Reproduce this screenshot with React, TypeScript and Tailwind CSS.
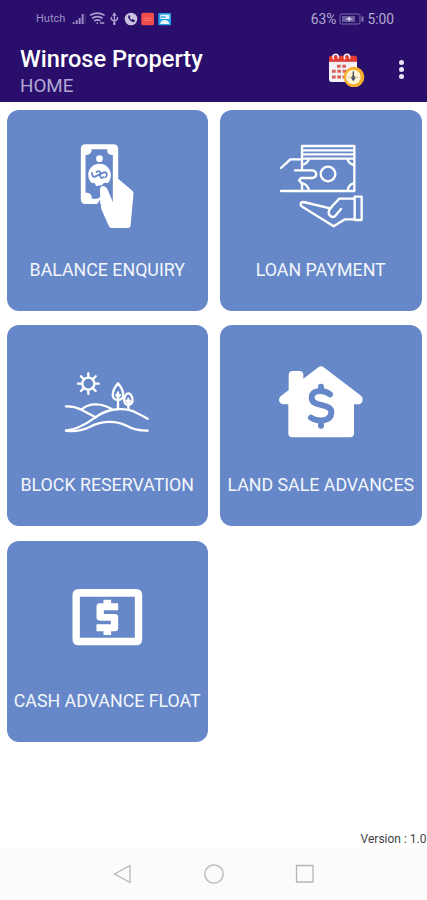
import type { ReactNode } from "react";

const BLUE = "#6688c8";

function CashHandIcon() {
  return (
    <svg className="size-[100px]" viewBox="-7.5 18 300 300" fill="none">
      <path
        fill="#fff"
        fillRule="evenodd"
        d="M78 43H162Q176 43 176 57V146L220 184Q222 187 222 192L213 288Q212 294 206 294H156Q150 294 148 288L125 236V222H78Q64 222 64 208V57Q64 43 78 43ZM96 58V64Q94 73 82 75H78V188H84Q96 190 97 202V206H113L122 202V176Q124 168 131 169Q139 169 143 177L160 218V75H156Q144 73 143 64V58Z"
      />
      <circle cx="120" cy="86" r="10" fill="#fff" />
      <path
        fill="#fff"
        d="M120 101A34 34 0 0 1 154 135Q154 150 145 159L138 158Q131 157 127 166L110 168L105 159L95 158Q86 148 86 135A34 34 0 0 1 120 101Z"
      />
      <path d="M113 221L122 209V230Z" fill={BLUE} />
      <path
        fill="#fff"
        d="M122 176Q124 168 132 168Q139 169 143 177L163 223L149 280L125 232Z"
      />
      <path
        d="M98 129Q97 142 107 140L111 137M111 126Q119 120 122 128V138Q124 147 132 142M131 128Q139 124 142 132Q143 139 138 142M107 140L131 128"
        stroke={BLUE}
        strokeWidth="5.5"
        strokeLinecap="round"
      />
    </svg>
  );
}

function LoanIcon() {
  return (
    <svg
      className="size-[100px]"
      viewBox="18 18 300 300"
      fill="none"
      stroke="#fff"
      strokeWidth="7"
      strokeLinecap="round"
      strokeLinejoin="round"
    >
      <path d="M111 118V48H268V183H48M111 61H268M111 73H268M111 86H268" />
      <path d="M48 114L76 88H108M90 121H143Q154 124 154 133Q152 144 142 144H108L102 151L111 160V183" />
      <path d="M112 104Q127 101 131 88M248 88Q251 101 266 105M266 160Q250 164 248 181M113 160Q128 164 132 181" />
      <circle cx="189" cy="132" r="22" />
      <path d="M195 235L116 216Q106 216 107 224Q107 228 113 231L206 289L240 268H266M195 235L223 206H266M228 237L210 259Q202 264 195 257Q188 250 193 240L202 228" />
      <path d="M269 200H290V270H269Z" />
    </svg>
  );
}

function LandIcon() {
  return (
    <svg
      className="size-[100px]"
      viewBox="22 -28 300 300"
      fill="none"
      stroke="#fff"
      strokeWidth="7"
      strokeLinecap="round"
      strokeLinejoin="round"
    >
      <circle cx="116" cy="70" r="18" />
      <path d="M116 50V39M116 90V101M96 70H85M136 70H147M102 56L94 48M130 56L138 48M102 84L94 92M130 84L138 92" />
      <path d="M49 138Q73 137 95 148L138 171M95 148C119 125 159 129 187 147" />
      <path d="M49 211C82 207 107 193 137 171C178 141 229 141 260 157Q278 166 294 175" />
      <path d="M49 211C72 215 94 212 120 200C155 181 197 180 228 195Q258 212 294 211" />
      <path d="M205 146V96M205 119C181 118 187 91 205 69C223 91 229 118 205 119M200 104L205 110L211 104" />
      <path d="M236 146V116M236 134C219 132 223 112 228 104Q236 94 244 104C251 113 252 132 236 134M231 122L236 127L241 122" />
    </svg>
  );
}

function HouseIcon() {
  return (
    <svg className="size-[100px]" viewBox="18 -13 300 300" fill="none">
      <path
        fill="#fff"
        d="M71 60Q71 47 83 47H103Q115 47 115 59V70L160 36Q168 30 176 36L288 121Q294 126 293 133Q291 147 279 147H267V234Q267 246 255 246H82Q70 246 70 234V147H57Q44 147 42 134Q42 127 48 122L71 104Z"
      />
      <path
        stroke={BLUE}
        strokeWidth="18"
        strokeLinecap="round"
        d="M168 94V106M168 198V211M195 117C175 101 140 104 140 127C140 158 200 141 199 171C198 199 158 201 138 187"
      />
    </svg>
  );
}

function CashFloatIcon() {
  return (
    <svg className="size-[100px]" viewBox="-8.5 -24 300 300" fill="none">
      <path
        fill="#fff"
        fillRule="evenodd"
        d="M57 42H229Q247 42 247 60V193Q247 211 229 211H57Q38 211 38 193V60Q38 42 57 42ZM60 65V188H225V65Z"
      />
      <path
        fill="#fff"
        d="M131 74H154V85H175V106H132V117H165Q175 117 175 127V159Q175 169 165 169H154V180H131V169H110V148H153V137H120Q110 137 110 127V95Q110 85 120 85H131Z"
      />
    </svg>
  );
}

function CalendarIcon() {
  return (
    <svg className="h-[34px] w-[37px]" viewBox="346 157 111 102" fill="none">
      <path d="M349 182H433V236Q433 244 425 244H357Q349 244 349 236Z" fill="#f3f0f6" />
      <path d="M349 183V171Q349 165 355 165H427Q433 165 433 171V183Z" fill="#e53b35" />
      <path
        d="M362 174Q358 161 369 161Q378 161 377 172M396 174Q392 161 403 161Q412 161 411 172"
        stroke="#f5e9f4"
        strokeWidth="5"
        strokeLinecap="round"
      />
      <path
        d="M373 197H401M358 212H401M358 229H396"
        stroke="#d95f59"
        strokeWidth="9"
        strokeDasharray="11 5"
      />
      <circle cx="424" cy="229" r="31" fill="#f9ae2b" />
      <circle cx="422" cy="229" r="22" fill="#fff3d4" />
      <path d="M422 212V232" stroke="#3d4657" strokeWidth="4" />
      <path d="M422 222L429 231L422 242L415 231Z" fill="#3d4657" />
      <path d="M407 230H437" stroke="#a5a08f" strokeWidth="2" />
    </svg>
  );
}

function StatusIcons() {
  return (
    <svg className="h-4 w-[102px]" viewBox="213 33 306 48" fill="none">
      <path d="M221 72V67M230 72V61M239 72V54M248 72V42" stroke="#9a8bc4" strokeWidth="6" />
      <path d="M256 40V73" stroke="#554287" strokeWidth="2" />
      <g stroke="#ada0d0" strokeWidth="5" strokeLinecap="round">
        <path d="M272 45Q292 34 312 45M278 54Q292 46 306 54M284 62Q292 57 300 62" />
        <path d="M292 69V70M302 69H311" />
        <path d="M343 42V71M334 52V58L343 64L352 58V52" strokeWidth="4" />
      </g>
      <path d="M336 47L343 37L350 47Z" fill="#ada0d0" />
      <circle cx="343" cy="71" r="4" fill="#ada0d0" />
      <circle cx="393" cy="57" r="19" fill="#c9c1df" />
      <path
        d="M385 47Q382 54 390 61Q397 68 403 65L405 61L398 57L395 60L389 54L391 51L388 45Z"
        fill="#2b1068"
      />
      <rect x="424" y="38" width="38" height="38" rx="5" fill="#f04e4d" />
      <path d="M431 55H455M432 61H454" stroke="#f8766f" strokeWidth="3" />
      <rect x="475" y="39" width="38" height="37" rx="2" fill="#27a0e5" />
      <path d="M481 44H508V57H481Z" fill="#e9f7ff" />
      <path d="M480 72Q482 60 494 60Q506 60 508 72Z" fill="#e9f7ff" />
      <path d="M483 51H497" stroke="#27a0e5" strokeWidth="4" />
    </svg>
  );
}

function BatteryIcon() {
  return (
    <svg className="h-3 w-[25px]" viewBox="0 0 25 12" fill="none">
      <rect x="1" y="1" width="20" height="10" rx="1.5" stroke="#7d6dab" />
      <rect x="3" y="3" width="13" height="6" fill="#6a599b" />
      <path d="M6 6.5L11 3.5V5.5H14L9.5 8.5V6.5Z" fill="#d9d2ea" />
      <path d="M23.5 3.5V8.5" stroke="#8a7bb4" strokeWidth="2" />
    </svg>
  );
}

type MenuCardProps = {
  label: string;
  children: ReactNode;
};

function MenuCard({ label, children }: MenuCardProps) {
  return (
    <button
      type="button"
      className="flex h-[201px] flex-col items-center rounded-[12px] bg-[#6688c8] pt-[26px]"
    >
      {children}
      <span className="mt-[21px] text-[17.8px] leading-[26px] whitespace-nowrap text-[#f3f6fc]">
        {label}
      </span>
    </button>
  );
}

export default function App() {
  return (
    <div className="flex h-[900px] w-[427px] flex-col bg-white font-['Roboto',sans-serif]">
      <header className="h-[102px] bg-[#290f6b]">
        <div className="flex h-[38px] items-center pr-[33px] pl-[36px] text-[#9c8fc4]">
          <span className="w-[35px] text-[11px] leading-4">Hutch</span>
          <StatusIcons />
          <div className="ml-auto flex items-center gap-[3px] text-[13.8px] leading-4 text-[#b3a8d3]">
            <span>63%</span>
            <BatteryIcon />
            <span>5:00</span>
          </div>
        </div>
        <div className="flex h-16 items-center pr-[23px] pl-[20px]">
          <div className="flex-1 pt-[5px]">
            <h1 className="text-[23.6px] leading-[28px] font-medium text-white">
              Winrose Property
            </h1>
            <p className="text-[18.8px] leading-[27px] text-[#b3a8d3]">HOME</p>
          </div>
          <CalendarIcon />
          <div className="ml-[34px] flex flex-col gap-[2px] pb-[2px]">
            <span className="size-[5px] rounded-full bg-[#eae5f4]" />
            <span className="size-[5px] rounded-full bg-[#eae5f4]" />
            <span className="size-[5px] rounded-full bg-[#eae5f4]" />
          </div>
        </div>
      </header>

      <main className="flex flex-1 flex-col pt-[7.5px] pr-[5.5px] pl-[6.5px]">
        <div className="grid grid-cols-2 gap-x-[12px] gap-y-[14.5px]">
          <MenuCard label="BALANCE ENQUIRY">
            <CashHandIcon />
          </MenuCard>
          <MenuCard label="LOAN PAYMENT">
            <LoanIcon />
          </MenuCard>
          <MenuCard label="BLOCK RESERVATION">
            <LandIcon />
          </MenuCard>
          <MenuCard label="LAND SALE ADVANCES">
            <HouseIcon />
          </MenuCard>
          <MenuCard label="CASH ADVANCE FLOAT">
            <CashFloatIcon />
          </MenuCard>
        </div>
        <p className="mt-auto -mr-[5px] pb-[1px] text-right text-[12px] leading-4 text-[#444]">
          Version : 1.0
        </p>
      </main>

      <nav className="flex h-[52px] items-center justify-center gap-[71px] bg-[#fbfbfb]">
        <svg className="size-5" viewBox="0 0 20 20" fill="none" stroke="#b5b5b5" strokeWidth="1.3">
          <path d="M1.5 10L17 1.5V18.5Z" />
        </svg>
        <svg className="size-5" viewBox="0 0 20 20" fill="none" stroke="#b5b5b5" strokeWidth="1.3">
          <circle cx="10" cy="10" r="9.2" />
        </svg>
        <svg className="size-5" viewBox="0 0 20 20" fill="none" stroke="#b5b5b5" strokeWidth="1.3">
          <path d="M1.5 1.5H18V18H1.5Z" />
        </svg>
      </nav>
    </div>
  );
}
